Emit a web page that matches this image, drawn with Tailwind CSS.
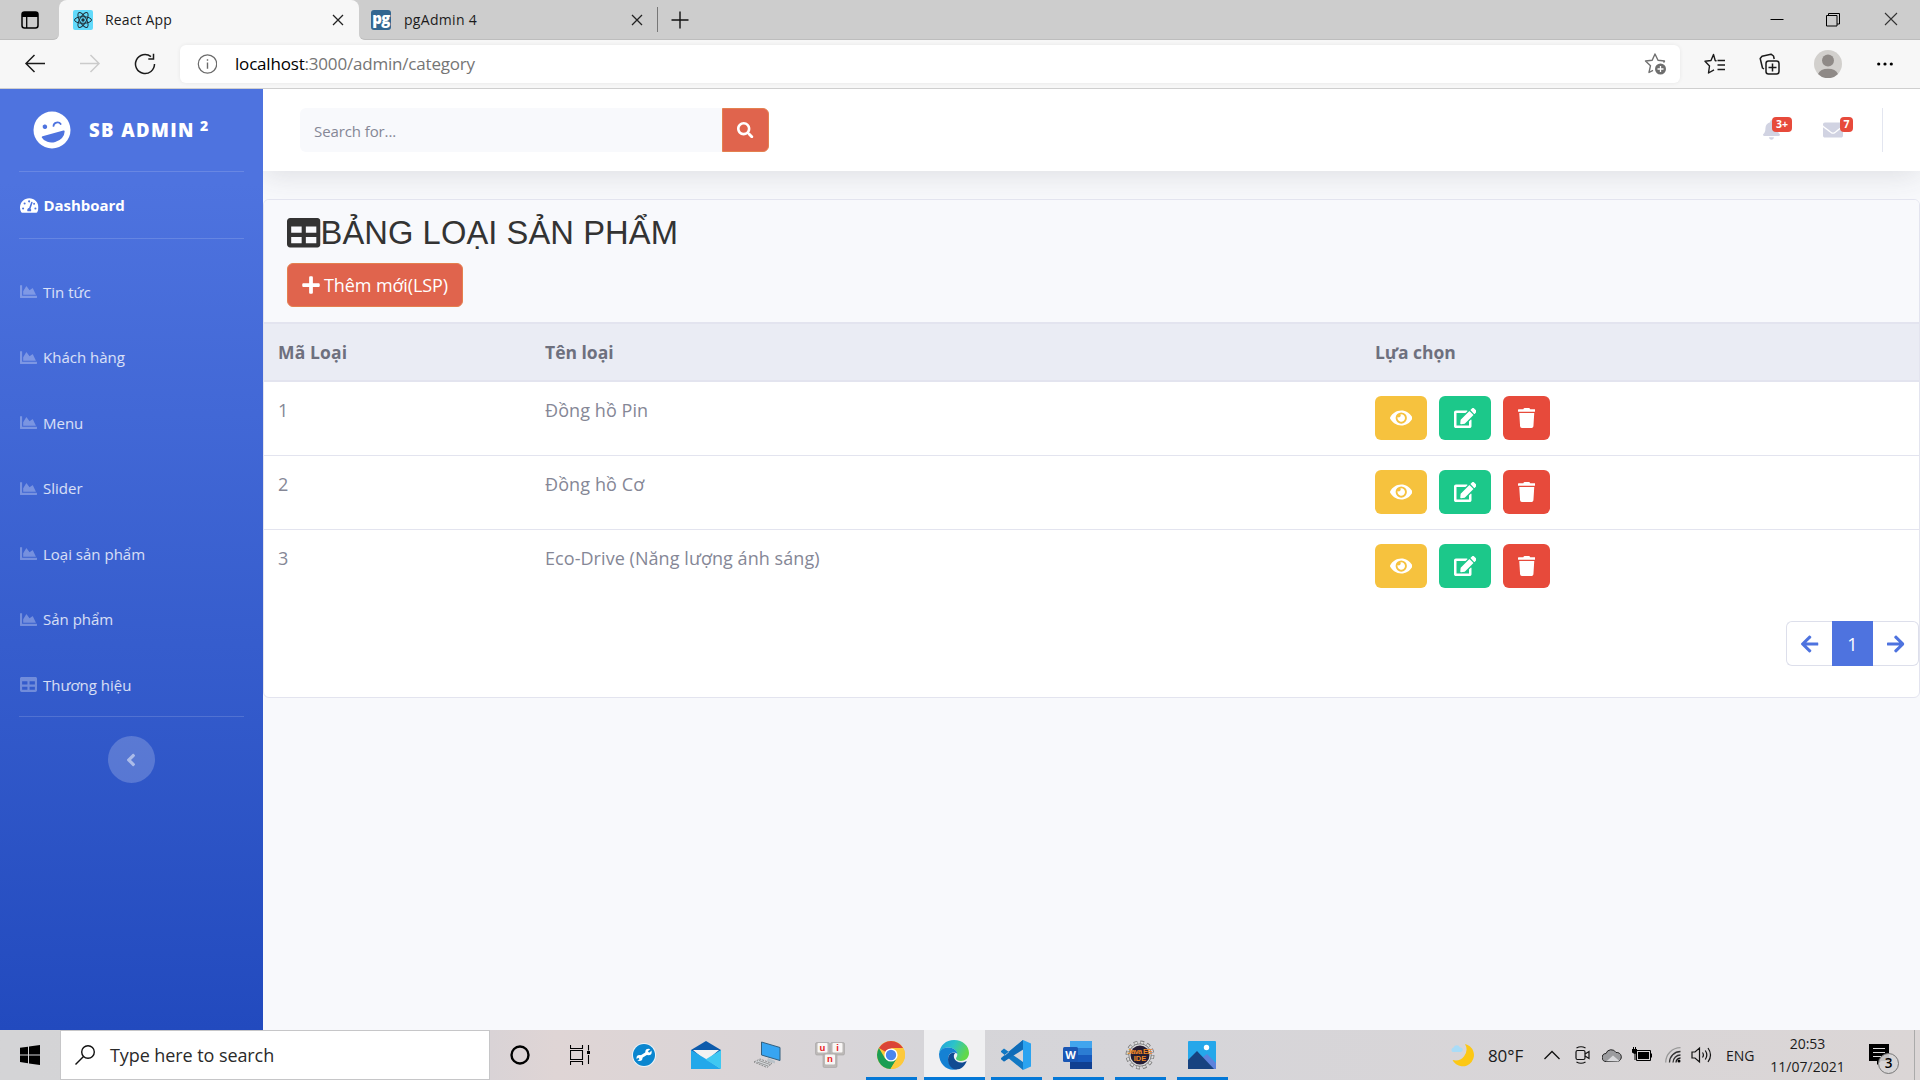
<!DOCTYPE html>
<html lang="vi">
<head>
<meta charset="utf-8">
<title>React App</title>
<script src="https://cdn.jsdelivr.net/npm/@tailwindcss/browser@4"></script>
</head>
<body class="w-[1920px] h-[1080px] overflow-hidden flex flex-col bg-white font-['Open_Sans','Noto_Sans',sans-serif] text-[#858796]">

<!-- Icon sprite -->
<svg class="hidden">
  <symbol id="chart" viewBox="0 0 512 512"><path d="M500 384c6.6 0 12 5.4 12 12v40c0 6.6-5.4 12-12 12H12c-6.600 0-12-5.400-12-12V76c0-6.600 5.400-12 12-12h40c6.600 0 12 5.400 12 12v308h436zM372.700 159.500L288 216l-85.300-113.700c-5.100-6.800-15.500-6.300-19.900 1L96 248v104h384l-89.900-187.800c-3.200-6.500-11.400-8.700-17.400-4.700z"/></symbol>
  <symbol id="table" viewBox="0 0 512 512"><path d="M464 32H48C21.490 32 0 53.490 0 80v352c0 26.510 21.490 48 48 48h416c26.510 0 48-21.490 48-48V80c0-26.510-21.490-48-48-48zM224 416H64v-96h160v96zm0-160H64v-96h160v96zm224 160H288v-96h160v96zm0-160H288v-96h160v96z"/></symbol>
  <symbol id="gauge" viewBox="0 0 576 512"><path fill-rule="evenodd" d="M288 32C129 32 0 161 0 320c0 53 14 102 39 145 6 9 16 15 27 15h444c11 0 21-6 27-15 25-43 39-92 39-145C576 161 447 32 288 32zM288 96a32 32 0 0 1 30 24l-8 24a32 32 0 1 1-22-48zM96 384a32 32 0 1 1 0-64 32 32 0 0 1 0 64zM144 224a32 32 0 1 1 0-64 32 32 0 0 1 0 64zM391 168L328 357a64 64 0 0 1 15 75H233a64 64 0 0 1 50-96l63-184a24 24 0 0 1 45 16zM407 212l12-36a32 32 0 1 1-12 36zM480 384a32 32 0 1 1 0-64 32 32 0 0 1 0 64z"/></symbol>
  <symbol id="search" viewBox="0 0 512 512"><path d="M505 442.700L405.300 343c-4.500-4.500-10.600-7-17-7H372c27.600-35.300 44-79.700 44-128C416 93.100 322.900 0 208 0S0 93.100 0 208s93.100 208 208 208c48.300 0 92.700-16.400 128-44v16.300c0 6.400 2.500 12.500 7 17l99.700 99.700c9.400 9.400 24.600 9.400 33.900 0l28.300-28.300c9.400-9.400 9.400-24.600.1-34zM208 336c-70.700 0-128-57.200-128-128 0-70.700 57.200-128 128-128 70.700 0 128 57.200 128 128 0 70.700-57.200 128-128 128z"/></symbol>
  <symbol id="plus" viewBox="0 0 448 512"><path d="M416 208H272V64c0-17.670-14.330-32-32-32h-32c-17.670 0-32 14.330-32 32v144H32c-17.670 0-32 14.330-32 32v32c0 17.670 14.330 32 32 32h144v144c0 17.670 14.330 32 32 32h32c17.670 0 32-14.330 32-32V304h144c17.670 0 32-14.330 32-32v-32c0-17.670-14.330-32-32-32z"/></symbol>
  <symbol id="eye" viewBox="0 0 576 512"><path d="M572.520 241.400C518.290 135.590 410.930 64 288 64S57.680 135.640 3.480 241.410a32.350 32.350 0 0 0 0 29.190C57.710 376.410 165.070 448 288 448s230.320-71.640 284.520-177.410a32.350 32.350 0 0 0 0-29.190zM288 400a144 144 0 1 1 144-144 143.930 143.930 0 0 1-144 144zm0-240a95.310 95.310 0 0 0-25.310 3.790 47.850 47.850 0 0 1-66.900 66.900A95.780 95.780 0 1 0 288 160z"/></symbol>
  <symbol id="edit" viewBox="0 0 576 512"><path d="M402.600 83.200l90.200 90.200c3.800 3.800 3.800 10 0 13.800L274.400 405.600l-92.800 10.300c-12.400 1.400-22.900-9.100-21.500-21.500l10.300-92.800L388.800 83.200c3.800-3.800 10-3.800 13.800 0zm162-22.900l-48.800-48.800c-15.200-15.200-39.900-15.200-55.200 0l-35.400 35.400c-3.800 3.800-3.800 10 0 13.800l90.200 90.200c3.800 3.800 10 3.800 13.800 0l35.400-35.400c15.200-15.300 15.200-40 0-55.200zM384 346.200V448H64V128h229.800c3.200 0 6.200-1.300 8.500-3.500l40-40c7.600-7.600 2.200-20.500-8.500-20.500H48C21.500 64 0 85.500 0 112v352c0 26.500 21.500 48 48 48h352c26.500 0 48-21.500 48-48V306.200c0-10.700-12.900-16-20.500-8.500l-40 40c-2.200 2.300-3.500 5.300-3.500 8.500z"/></symbol>
  <symbol id="trash" viewBox="0 0 448 512"><path d="M432 32H312l-9.400-18.700A24 24 0 0 0 281.100 0H166.800a23.720 23.720 0 0 0-21.400 13.300L136 32H16A16 16 0 0 0 0 48v32a16 16 0 0 0 16 16h416a16 16 0 0 0 16-16V48a16 16 0 0 0-16-16zM53.200 467a48 48 0 0 0 47.900 45h245.800a48 48 0 0 0 47.900-45L416 128H32z"/></symbol>
  <symbol id="mail" viewBox="0 0 512 512"><path d="M502.300 190.800c3.900-3.100 9.700-.2 9.700 4.700V400c0 26.500-21.500 48-48 48H48c-26.500 0-48-21.500-48-48V195.600c0-5 5.700-7.800 9.700-4.700 22.400 17.400 52.100 39.500 154.100 113.600 21.100 15.400 56.700 47.800 92.200 47.600 35.700.3 72-32.800 92.300-47.600 102-74.100 131.600-96.300 154-113.700zM256 320c23.200.4 56.600-29.200 73.400-41.400 132.700-96.300 142.800-104.700 173.400-128.700 5.800-4.500 9.200-11.500 9.200-18.900v-19c0-26.500-21.500-48-48-48H48c-26.500 0-48 21.500-48 48v19c0 7.400 3.400 14.300 9.200 18.900 30.600 23.900 40.700 32.400 173.400 128.700 16.800 12.200 50.200 41.800 73.400 41.400z"/></symbol>
  <symbol id="bell" viewBox="0 0 448 512"><path d="M224 512c35.320 0 63.970-28.650 63.970-64H160.030c0 35.350 28.650 64 63.970 64zm215.390-149.710c-19.320-20.760-55.470-51.990-55.470-154.290 0-77.700-54.480-139.900-127.940-155.160V32c0-17.670-14.320-32-31.980-32s-31.980 14.330-31.980 32v20.840C118.560 68.100 64.080 130.300 64.080 208c0 102.300-36.150 133.530-55.470 154.290-6 6.450-8.660 14.160-8.610 21.710.11 16.400 12.980 32 32.100 32h383.800c19.120 0 32-15.600 32.100-32 .05-7.550-2.610-15.270-8.610-21.710z"/></symbol>
  <symbol id="arrow" viewBox="0 0 448 512"><path d="M257.500 445.100l-22.200 22.200c-9.400 9.400-24.600 9.400-33.900 0L7 273c-9.400-9.400-9.400-24.600 0-33.900L201.400 44.700c9.400-9.400 24.600-9.400 33.900 0l22.200 22.200c9.500 9.500 9.300 25-.4 34.300L136.600 216H424c13.300 0 24 10.700 24 24v32c0 13.300-10.700 24-24 24H136.600l120.500 114.800c9.800 9.300 10 24.800.4 34.300z"/></symbol>
  <symbol id="angle" viewBox="0 0 256 512"><path d="M31.700 239l136-136c9.400-9.400 24.600-9.400 33.900 0l22.600 22.600c9.400 9.400 9.400 24.600 0 33.900L127.900 256l96.400 96.400c9.400 9.400 9.400 24.600 0 33.900L201.700 409c-9.400 9.400-24.600 9.400-33.900 0l-136-136c-9.500-9.400-9.500-24.600-.1-34z"/></symbol>
  <symbol id="close" viewBox="0 0 12 12"><path d="M1 1l10 10M11 1L1 11" fill="none" stroke="#222" stroke-width="1.300"/></symbol>
</svg>

<!-- Browser tab strip -->
<header class="shrink-0 h-[40px] flex bg-[#f7f7f7] text-[14px] text-[#1b1b1b]">
  <div class="w-[59px] bg-[#cdcdcd] border-b border-[#bdbdbd] rounded-br-md flex items-center pl-[21px]">
    <svg class="w-[18px] h-[18px]" viewBox="0 0 18 18"><rect x="1" y="1" width="16" height="16" rx="2.500" fill="none" stroke="#000" stroke-width="1.500"/><path d="M1 3.500a2.500 2.500 0 0 1 2.500-2.500h11a2.500 2.500 0 0 1 2.500 2.500V6H1z"/><path d="M5.700 6v11" stroke="#000" stroke-width="1.300"/></svg>
  </div>
  <div class="w-[300px] bg-[#cdcdcd]">
    <div class="h-full bg-[#f7f7f7] rounded-t-lg flex items-center pl-[14px] pr-[15px]">
      <svg class="w-5 h-5 mr-3" viewBox="0 0 20 20"><rect width="20" height="20" rx="2" fill="#61dafb"/><g fill="none" stroke="#20303a" stroke-width="1"><ellipse cx="10" cy="10" rx="8.500" ry="3.300"/><ellipse cx="10" cy="10" rx="8.500" ry="3.300" transform="rotate(60 10 10)"/><ellipse cx="10" cy="10" rx="8.500" ry="3.300" transform="rotate(120 10 10)"/></g><circle cx="10" cy="10" r="1.700" fill="#20303a"/></svg>
      <span class="flex-1 pb-px tracking-[0.15px]">React App</span>
      <svg class="w-3 h-3"><use href="#close"/></svg>
    </div>
  </div>
  <div class="flex-1 bg-[#cdcdcd] border-b border-[#bdbdbd] rounded-bl-md flex items-center pl-3">
    <div class="w-5 h-5 rounded-[3px] bg-[#326690] text-white font-extrabold text-[15px] leading-[16px] text-center tracking-[-0.5px]">pg</div>
    <span class="ml-[13px] w-[227px] tracking-[0.3px]">pgAdmin 4</span>
    <svg class="w-3 h-3"><use href="#close"/></svg>
    <div class="ml-[14px] w-px h-[25px] bg-[#777]"></div>
    <svg class="ml-[13px] w-[18px] h-[18px]" viewBox="0 0 18 18"><path d="M9 0.500v17M0.500 9h17" stroke="#111" stroke-width="1.400"/></svg>
    <div class="flex-1"></div>
    <svg class="w-[14px] h-[14px] mr-[42px]" viewBox="0 0 14 14"><path d="M0.500 6.500h13" stroke="#000"/></svg>
    <svg class="w-[14px] h-[14px] mr-[44px]" viewBox="0 0 14 14" fill="none" stroke="#000"><path d="M0.500 2.500h10.500v10.500h-10.500zM2.500 2.500v-2h11v10.500h-2.500"/></svg>
    <svg class="w-[14px] h-[14px] mr-[22px] -mt-0.5" viewBox="0 0 14 14"><path d="M1 1l12 12M13 1L1 13" stroke="#333" stroke-width="1.100"/></svg>
  </div>
</header>

<!-- Address toolbar -->
<div class="shrink-0 h-[49px] flex items-center bg-[#f7f7f7] border-b border-[#cfcfcf] pl-6 pb-px">
  <svg class="w-[22px] h-[22px]" viewBox="0 0 22 22" fill="none" stroke="#1b1b1b" stroke-width="1.500"><path d="M21 10.500H2M10.500 2L2 10.500l8.500 8.500"/></svg>
  <svg class="w-[22px] h-[22px] ml-[33px]" viewBox="0 0 22 22" fill="none" stroke="#cbcbcb" stroke-width="1.500"><path d="M1 10.500h19M11.500 2L20 10.500l-8.500 8.500"/></svg>
  <svg class="w-[22px] h-[22px] ml-[33px]" viewBox="0 0 22 22" fill="none" stroke="#1b1b1b" stroke-width="1.500"><path d="M20.500 11a9.500 9.500 0 1 1-3.500-7.300M19.500 0.800V6h-5.200"/></svg>
  <div class="ml-[24px] w-[1500px] h-[38px] bg-white rounded-md shadow-[0_0_4px_rgba(0,0,0,0.07)] flex items-center pl-[17px] pr-[14px]">
    <svg class="w-5 h-5" viewBox="0 0 20 20" fill="none" stroke="#6a6a6a" stroke-width="1.200"><circle cx="10.500" cy="10" r="9.200"/><path d="M10.500 8.500v6.200M10.500 5.200v1.600" stroke-width="1.400"/></svg>
    <span class="ml-[18px] flex-1 text-[17px] tracking-[-0.19px] text-[#757575]"><span class="text-black">localhost</span>:3000/admin/category</span>
    <svg class="w-[22px] h-[22px]" viewBox="0 0 22 22"><path d="M19.500 9.500l1-1.500-6.500-.8L11 1 8.200 7.200 1.500 8l5 4.700L5 19.500l4-2.200" fill="none" stroke="#707070" stroke-width="1.400" stroke-linejoin="round"/><circle cx="16.500" cy="16" r="5.500" fill="#6e6e6e"/><path d="M16.500 13v6M13.500 16h6" stroke="#fff" stroke-width="1.300"/></svg>
  </div>
  <svg class="ml-[24px] w-[21px] h-[22px]" viewBox="0 0 21 22" fill="none" stroke="#1b1b1b" stroke-width="1.400" stroke-linejoin="round"><path d="M12.500 8l-1.300-.5L9.500 1.500 7 7.500l-6 .8 4.500 4.700L4.500 20l5.500-3.200M13.500 7.500H21M13.500 12H21M13.500 16.500H21"/></svg>
  <svg class="ml-[34px] w-[21px] h-[22px]" viewBox="0 0 21 22" fill="none" stroke="#1b1b1b" stroke-width="1.500" stroke-linejoin="round"><rect x="7" y="8" width="13" height="13" rx="2.500"/><path d="M13.500 10.500v8M9.500 14.500h8M5 16L3.500 15 1.200 5.500 3 3.300 12 1.200 14.500 3l.7 3"/></svg>
  <svg class="ml-[34px] w-7 h-7" viewBox="0 0 28 28"><circle cx="14" cy="14" r="14" fill="#d2d0cd"/><circle cx="14" cy="10.500" r="6" fill="#8f8a87"/><path d="M4 24a10.500 7.500 0 0 1 20 0 14 14 0 0 1-20 0z" fill="#8f8a87"/></svg>
  <svg class="ml-[35px] w-4 h-4" viewBox="0 0 16 16"><circle cx="1.700" cy="8" r="1.600"/><circle cx="8" cy="8" r="1.600"/><circle cx="14.300" cy="8" r="1.600"/></svg>
</div>

<div class="shrink-0 h-[941px] flex">
  <!-- Sidebar -->
  <nav class="w-[263px] shrink-0 bg-linear-to-b from-[#4e73df] from-10% to-[#224abe] px-[19px] text-[15px] text-white/80 fill-white/30">
    <div class="h-[83px] border-b border-white/15 flex items-center pl-[14px] text-white">
      <svg class="w-[38px] h-[38px] -mt-px" viewBox="0 0 38 38"><circle cx="19" cy="19" r="18.500" fill="#fff"/><g transform="rotate(-15 19 19)"><path d="M8.300 22.500h21.500c.8 0 1.200.6 1 1.300a12 9.500 0 0 1-23.500 0c-.2-.7.300-1.300 1-1.300z" fill="#4e73df"/><circle cx="13" cy="14" r="2.300" fill="#4e73df"/><path d="M21.500 15.500c1-3.300 6.300-3.300 7.400 0" fill="none" stroke="#4e73df" stroke-width="1.800" stroke-linecap="round"/></g></svg>
      <span class="ml-[18px] text-[18.500px] font-extrabold tracking-[1.400px]">SB ADMIN</span>
      <span class="ml-[5px] text-[14px] font-extrabold pb-[10px]">2</span>
    </div>
    <div class="h-[67px] border-b border-white/15 flex items-center gap-[5px] pl-px text-white font-bold tracking-[-0.05px]">
      <svg class="w-[18.500px] h-[17px] fill-white"><use href="#gauge"/></svg><span>Dashboard</span>
    </div>
    <ul class="pt-[21px] border-b border-white/15 h-[478px] leading-[22px]">
      <li class="h-[65.500px] pt-[20.500px]"><a class="flex items-center gap-[6px] pl-px"><svg class="w-[17px] h-[17px]"><use href="#chart"/></svg>Tin tức</a></li>
      <li class="h-[65.500px] pt-[20.500px]"><a class="flex items-center gap-[6px] pl-px"><svg class="w-[17px] h-[17px]"><use href="#chart"/></svg>Khách hàng</a></li>
      <li class="h-[65.500px] pt-[20.500px]"><a class="flex items-center gap-[6px] pl-px"><svg class="w-[17px] h-[17px]"><use href="#chart"/></svg>Menu</a></li>
      <li class="h-[65.500px] pt-[20.500px]"><a class="flex items-center gap-[6px] pl-px"><svg class="w-[17px] h-[17px]"><use href="#chart"/></svg>Slider</a></li>
      <li class="h-[65.500px] pt-[20.500px]"><a class="flex items-center gap-[6px] pl-px"><svg class="w-[17px] h-[17px]"><use href="#chart"/></svg>Loại sản phẩm</a></li>
      <li class="h-[65.500px] pt-[20.500px]"><a class="flex items-center gap-[6px] pl-px"><svg class="w-[17px] h-[17px]"><use href="#chart"/></svg>Sản phẩm</a></li>
      <li class="pt-[20.500px]"><a class="flex items-center gap-[6px] pl-px"><svg class="w-[17px] h-[17px]"><use href="#table"/></svg>Thương hiệu</a></li>
    </ul>
    <button class="mx-auto mt-[19px] w-[47px] h-[47px] rounded-full bg-white/20 flex items-center justify-center pr-px"><svg class="w-[10px] h-[20px] fill-white/50"><use href="#angle"/></svg></button>
  </nav>

  <!-- Page content -->
  <main class="flex-1 bg-[#f8f9fc]">
    <div class="h-[82px] bg-white shadow-[0_3px_31px_rgba(58,59,69,0.15)] [clip-path:inset(0_0_-50px_0)] flex items-center pl-[37px] pr-[37px]">
      <div class="w-[422px] h-[44px] rounded-l-md bg-[#f8f9fc] flex items-center pl-[14px] pt-0.5 text-[15px] tracking-[-0.1px]">Search for...</div>
      <button class="w-[47px] h-[44px] rounded-r-md bg-[#e0644d] border border-[#e4804f] flex items-center justify-center"><svg class="w-[16.500px] h-[16.500px] fill-white"><use href="#search"/></svg></button>
      <div class="ml-auto relative mr-[43px]">
        <svg class="w-[17px] h-[20px] fill-[#d1d3e2]"><use href="#bell"/></svg>
        <span class="absolute -top-[3px] left-[9px] w-5 h-[15px] rounded bg-[#e74a3b] text-white text-[10.500px] leading-[15px] font-bold text-center">3+</span>
      </div>
      <div class="relative mr-[39px]">
        <svg class="w-5 h-5 fill-[#d1d3e2]"><use href="#mail"/></svg>
        <span class="absolute -top-[3px] left-[17px] w-[13px] h-[15px] rounded bg-[#e74a3b] text-white text-[10.500px] leading-[15px] font-bold text-center">7</span>
      </div>
      <div class="w-px h-[44px] bg-[#e3e6f0]"></div>
    </div>

    <section class="relative mt-7 h-[499px] rounded-md border border-[#e3e4ef] bg-white overflow-hidden">
      <div class="h-[122px] bg-[#f8f9fc] pl-[23px] pt-[14px]">
        <h1 class="h-[38px] flex items-center font-['Liberation_Sans',sans-serif] text-[32.700px] leading-[38px] tracking-[0.08px] text-[#333]"><svg class="w-[33.500px] h-[33.500px] fill-[#333]"><use href="#table"/></svg>BẢNG LOẠI SẢN PHẨM</h1>
        <button class="mt-[11px] w-[176px] h-[44px] rounded-md bg-[#e0644d] border border-[#e4804f] text-white text-[18px] tracking-[-0.1px] flex items-center pl-[14px]"><svg class="w-[18px] h-5 mr-1 fill-white"><use href="#plus"/></svg>Thêm mới(LSP)</button>
      </div>
      <div class="h-[60px] bg-[#eaecf4] border-y-2 border-[#e3e4ef] grid grid-cols-[267px_830px_1fr] items-center pl-[14px] pt-px text-[17.500px] font-bold text-[#6e707e]">
        <div class="tracking-[0.15px]">Mã Loại</div><div>Tên loại</div><div class="tracking-[-0.05px]">Lựa chọn</div>
      </div>
      <div class="text-[18px] leading-[27px]">
        <div class="h-[74px] border-b border-[#e3e4ef] grid grid-cols-[267px_830px_1fr] pl-[14px] pt-[14px]">
          <div class="pt-px">1</div><div class="pt-px tracking-[0.08px]">Đồng hồ Pin</div>
          <div class="flex gap-3 fill-white">
            <button class="w-[52px] h-[44px] rounded-md bg-[#f6c23e] flex items-center justify-center"><svg class="w-[22.500px] h-5"><use href="#eye"/></svg></button>
            <button class="w-[52px] h-[44px] rounded-md bg-[#1cc88a] flex items-center justify-center"><svg class="w-[22.500px] h-5"><use href="#edit"/></svg></button>
            <button class="w-[47px] h-[44px] rounded-md bg-[#e74a3b] flex items-center justify-center"><svg class="w-[17.500px] h-5"><use href="#trash"/></svg></button>
          </div>
        </div>
        <div class="h-[74px] border-b border-[#e3e4ef] grid grid-cols-[267px_830px_1fr] pl-[14px] pt-[14px]">
          <div class="pt-px">2</div><div class="pt-px tracking-[0.1px]">Đồng hồ Cơ</div>
          <div class="flex gap-3 fill-white">
            <button class="w-[52px] h-[44px] rounded-md bg-[#f6c23e] flex items-center justify-center"><svg class="w-[22.500px] h-5"><use href="#eye"/></svg></button>
            <button class="w-[52px] h-[44px] rounded-md bg-[#1cc88a] flex items-center justify-center"><svg class="w-[22.500px] h-5"><use href="#edit"/></svg></button>
            <button class="w-[47px] h-[44px] rounded-md bg-[#e74a3b] flex items-center justify-center"><svg class="w-[17.500px] h-5"><use href="#trash"/></svg></button>
          </div>
        </div>
        <div class="h-[91px] grid grid-cols-[267px_830px_1fr] pl-[14px] pt-[14px]">
          <div class="pt-px">3</div><div class="pt-px tracking-[0.06px]">Eco-Drive (Năng lượng ánh sáng)</div>
          <div class="flex gap-3 fill-white">
            <button class="w-[52px] h-[44px] rounded-md bg-[#f6c23e] flex items-center justify-center"><svg class="w-[22.500px] h-5"><use href="#eye"/></svg></button>
            <button class="w-[52px] h-[44px] rounded-md bg-[#1cc88a] flex items-center justify-center"><svg class="w-[22.500px] h-5"><use href="#edit"/></svg></button>
            <button class="w-[47px] h-[44px] rounded-md bg-[#e74a3b] flex items-center justify-center"><svg class="w-[17.500px] h-5"><use href="#trash"/></svg></button>
          </div>
        </div>
      </div>
      <div class="flex justify-end fill-[#4e73df] text-[18px]">
        <a class="w-[46px] h-[45px] border border-r-0 border-[#dddfeb] rounded-l-md flex items-center justify-center pl-px"><svg class="w-[17.500px] h-5"><use href="#arrow"/></svg></a>
        <a class="w-[41px] h-[45px] bg-[#4e73df] text-white flex items-center justify-center pt-0.5">1</a>
        <a class="w-[46px] h-[45px] border border-l-0 border-[#dddfeb] rounded-r-md flex items-center justify-center"><svg class="w-[17.500px] h-5 -scale-x-100"><use href="#arrow"/></svg></a>
      </div>
    </section>
  </main>
</div>

<!-- Taskbar -->
<footer class="h-[50px] shrink-0 flex bg-linear-to-r from-[#d4d4d6] via-[#d6d5d9] via-60% to-[#dbd6d6] text-[#1b1b1b]">
  <div class="w-[60px] flex items-center pl-5"><svg class="w-5 h-5" viewBox="0 0 20 20"><path d="M0 2.800L8 1.700v7.700H0zM9 1.500L20 0v9.400H9zM0 10.400h8V18.200L0 17.100zM9 10.400h11V20L9 18.400z"/></svg></div>
  <div class="w-[430px] bg-white border border-[#c6c6c8] flex items-center pl-[14px]">
    <svg class="w-5 h-5" viewBox="0 0 20 20" fill="none" stroke="#111" stroke-width="1.400"><circle cx="13" cy="7" r="6.300"/><path d="M8.500 11.500L0.500 19.500"/></svg>
    <span class="ml-[15px] text-[18px] tracking-[-0.08px] text-[#2a2a2a]">Type here to search</span>
  </div>
  <div class="flex bg-linear-to-r from-[#d9d3d6] via-[#dfd5d5] via-15% to-[#d6d5d9]">
    <div class="w-[61px] flex items-center justify-center pr-px"><svg class="w-5 h-5" viewBox="0 0 20 20"><circle cx="10" cy="10" r="8.500" fill="none" stroke="#000" stroke-width="2.400"/></svg></div>
    <div class="w-[58px] flex items-center justify-center"><svg class="w-5 h-5" viewBox="0 0 20 20" fill="none" stroke="#000" stroke-width="1.100"><path d="M0.500 5.500h12v9h-12zM0.500 0v3.500h12V0M0.500 20v-3.500h12V20M18.500 0v5.500M18.500 10v9"/><path d="M17 6h3v3h-3z" fill="#000" stroke="none"/></svg></div>
    <div class="w-[70px] flex items-center justify-center"><svg class="w-6 h-6" viewBox="0 0 24 24"><circle cx="12" cy="12" r="12" fill="#eef4f8"/><circle cx="12" cy="12" r="11" fill="#0b86cf"/><path d="M8 14.500L16 9.500" stroke="#fff" stroke-width="3"/><circle cx="7.500" cy="15" r="3" fill="#fff"/><circle cx="16.500" cy="9" r="3.200" fill="#fff"/><path d="M16.500 9l4-3.500M7 15.500l-4 2.500" stroke="#0b86cf" stroke-width="2"/></svg></div>
    <div class="w-[54px] flex items-center justify-center"><svg class="w-[30px] h-7" viewBox="0 0 30 28"><path d="M0 9L15 0l15 9v6H0z" fill="#0d5bab"/><path d="M2 9h26L15 20z" fill="#f2f2f2"/><path d="M0 9v19h30L15 18z" fill="#22a8ea"/><path d="M30 9L14.500 18.500 30 28z" fill="#3fc8f2"/></svg></div>
    <div class="w-[68px] flex items-center justify-center"><svg class="w-7 h-7" viewBox="0 0 28 28"><path d="M8.500 1l18.500 5.500v13L8.500 14z" fill="#37a5f2" stroke="#34607f" stroke-width="1"/><path d="M15 17l-1 3 8 2.500V20" fill="#b9c2c8"/><path d="M1 21l6-3 12 4.500-5 4z" fill="#d5d8db" stroke="#777" stroke-width=".8" stroke-dasharray="2 1"/><path d="M4 21l11 4M6 19.500l11 4" stroke="#888" stroke-width=".8"/></svg></div>
    <div class="w-[57px] flex items-center justify-center"><svg class="w-[30px] h-[26px]" viewBox="0 0 30 26" font-family="Liberation Sans" font-weight="bold" font-size="9.500" fill="#e81c24" text-anchor="middle"><g fill="#bcb9b7" stroke="#a5a3a2" stroke-width=".6"><rect x=".5" y=".5" width="14" height="12.500" rx="1.500"/><rect x="15.500" y=".5" width="14" height="12.500" rx="1.500"/><rect x="8" y="12" width="14" height="13.500" rx="1.500"/></g><g fill="#f8f6f5"><rect x="2.500" y="1" width="10" height="9.500" rx="1"/><rect x="17.500" y="1" width="10" height="9.500" rx="1"/><rect x="10" y="12.500" width="10" height="10" rx="1"/></g><text x="7.500" y="8.500">u</text><text x="22.500" y="8.700">i</text><text x="15" y="20">n</text></svg></div>
    <div class="w-[66px] flex items-center justify-center relative"><svg class="w-7 h-7" viewBox="0 0 28 28"><circle cx="14" cy="14" r="14" fill="#fdc93b"/><path d="M14 14L1.900 7A14 14 0 0 1 26.100 7z" fill="#db4437"/><path d="M1.900 7A14 14 0 0 0 13.500 28L20 17.300 8 17.300z" fill="#1b9e54"/><path d="M14 7h12.100A14 14 0 0 1 13.500 28L20 17.500z" fill="#fdc93b"/><circle cx="14" cy="14" r="6.600" fill="#fff"/><circle cx="14" cy="14" r="5.200" fill="#4a86ee"/></svg><div class="absolute bottom-0 w-[51px] h-[3px] bg-[#0478d7]"></div></div>
  </div>
  <div class="w-[61px] flex items-center justify-center bg-[#f0f0f2] border-b-[3px] border-[#0478d7] pt-[3px] pr-px">
    <svg class="w-[30px] h-[30px]" viewBox="0 0 30 30"><defs><linearGradient id="eg" x1="0" x2="1" y1="0" y2=".4"><stop offset="0" stop-color="#1f9de0"/><stop offset=".5" stop-color="#2cc3c9"/><stop offset="1" stop-color="#62d84a"/></linearGradient></defs><path d="M0 14C1 5 7 0 15 0c9 0 15 6 15 13 0 5-4 8-8 8-3 0-5-1-5-2.500 0-1 1.300-1.500 1.300-4 0-4-4-7-9-7C5 7.500 1 10 0 14z" fill="url(#eg)"/><path d="M0 14c1-4.500 5-6.500 9.300-6.500 5 0 9 3 9 6.500-2-2.500-8-2-9 3-1 6 3 11 9 12-9 3-18.300-4-18.300-15z" fill="#1581d3"/><path d="M9.300 17c1-3.500 4-5 7-4-3 2-1.500 9.500 6 9.500 2 0 4-.7 5.500-1.500-2 5-6 8.500-10.500 8.500-5 0-9.500-6-8-12.500z" fill="#114b92"/></svg>
  </div>
  <div class="w-[62px] relative flex items-center justify-center"><svg class="w-[30px] h-[30px]" viewBox="0 0 30 30"><path d="M0 11l3-2.500L22 22v8L0 12zM0 19l3 2.500L22 8V0L0 18z" fill="#1279c4"/><path d="M0 19L22 0l1 9L3 21.500z" fill="#0f6cb8"/><path d="M22 0l8 3.500v23L22 30z" fill="#2ba3f0"/></svg><div class="absolute bottom-0 w-[51px] h-[3px] bg-[#0478d7]"></div></div>
  <div class="w-[62px] relative flex items-center justify-center"><svg class="w-[30px] h-7" viewBox="0 0 30 28"><path d="M7 0h22v7H7z" fill="#41a5ee"/><path d="M7 7h22v7H7z" fill="#2b7cd3"/><path d="M7 14h22v7H7z" fill="#185abd"/><path d="M7 21h22v7H7z" fill="#103f91"/><rect y="6" width="15" height="15" rx="1.500" fill="#1a56b4"/><text x="7.500" y="17.700" font-family="Open Sans" font-size="11" font-weight="bold" fill="#fff" text-anchor="middle">W</text></svg><div class="absolute bottom-0 w-[51px] h-[3px] bg-[#0478d7]"></div></div>
  <div class="w-[62px] relative flex items-center justify-center"><svg class="w-[30px] h-[30px]" viewBox="0 0 30 30"><circle cx="15" cy="15" r="12.700" fill="none" stroke="#777" stroke-width="3.400" stroke-dasharray="3.700 2.950"/><circle cx="15" cy="15" r="12.500" fill="none" stroke="#ddd" stroke-width="2.200" stroke-dasharray="2.700 3.845" stroke-dashoffset="-.5"/><circle cx="15" cy="15" r="11.200" fill="#dcdcdc" stroke="#666" stroke-width=".7"/><circle cx="15" cy="15" r="9.500" fill="#241c33"/><g font-family="Liberation Sans" font-weight="bold" font-size="7.500" fill="#f08a24" text-anchor="middle"><text x="15" y="14" textLength="25">Java EE</text><text x="15" y="20.500">IDE</text></g></svg><div class="absolute bottom-0 w-[51px] h-[3px] bg-[#0478d7]"></div></div>
  <div class="w-[62px] relative flex items-center justify-center"><svg class="w-7 h-7" viewBox="0 0 28 28"><rect width="28" height="28" rx="1" fill="#25a7ea"/><path d="M10 20l9-7 9 9v6H14z" fill="#5d82dc"/><path d="M0 19L9 10l17 18H0z" fill="#174380"/><circle cx="18.500" cy="6.500" r="2.700" fill="#fff"/></svg><div class="absolute bottom-0 w-[51px] h-[3px] bg-[#0478d7]"></div></div>

  <!-- System tray -->
  <div class="ml-auto flex items-center">
    <div class="w-[37px]"><svg class="w-6 h-6" viewBox="0 0 24 24"><path d="M14 1A11.300 11.300 0 1 1 1.500 17 11 11 0 0 0 14 1z" fill="#fcc815"/><path d="M1.500 9a2.500 2.500 0 0 1 1-4.500 3.500 3.500 0 0 1 6.500 0A2.300 2.300 0 0 1 10 9z" fill="#a9dcf7"/></svg></div>
    <div class="w-[56px] text-[17px] pt-0.5 tracking-[-0.1px]">80°F</div>
    <div class="w-[31px]"><svg class="w-4 h-4" viewBox="0 0 16 16"><path d="M0.500 12L8 4.500 15.500 12" fill="none" stroke="#111" stroke-width="1.300"/></svg></div>
    <div class="w-[27px]"><svg class="w-4 h-[18px]" viewBox="0 0 16 18" fill="none" stroke="#111" stroke-width="1.200"><rect x="1" y="4.500" width="9" height="9" rx="1.500"/><path d="M10 8l4-2.500v7L10 10M1.500 2Q6 -.5 10.500 2M1.500 16q4.500 2.500 9 0"/></svg></div>
    <div class="w-[30px]"><svg class="w-5 h-4" viewBox="0 0 20 16"><path d="M4.500 14.500a4 4 0 0 1-.5-8A5.500 5.500 0 0 1 14 5.500a4.500 4.500 0 0 1 1.500 9z" fill="#9c9c9f" stroke="#222"/><path d="M4.500 14.200L11 8.500l6.500 5.500-2 .5z" fill="#d9d9dc"/></svg></div>
    <div class="w-[33px]"><svg class="w-5 h-4" viewBox="0 0 20 16"><path d="M4.500 3.500h14v10h-14z" fill="none" stroke="#000"/><path d="M6 5h11v7H6z"/><path d="M19 6.500h1v4h-1zM0 2h5v3.500L3.500 7v6h-1V7L0 5.500zM1 0h1v2H1zM3 0h1v2H3z"/></svg></div>
    <div class="w-[26px]"><svg class="w-4 h-4" viewBox="0 0 16 16" fill="none" stroke-width="1.300"><path d="M0.700 15.500A14.800 14.800 0 0 1 15.500.7" stroke="#999"/><path d="M4.500 15.500a11 11 0 0 1 11-11M8 15.500A7.500 7.500 0 0 1 15.500 8" stroke="#333"/><path d="M11 15.500a4.500 4.500 0 0 1 4.500-4.500" stroke="#111"/><circle cx="14" cy="14" r="1.500" fill="#000"/></svg></div>
    <div class="w-[35px]"><svg class="w-[22px] h-[18px]" viewBox="0 0 22 18" fill="none" stroke="#111" stroke-width="1.200"><path d="M1 6h3l4.500-4v14L4 12H1zM11.500 6.500q1.800 2.500 0 5M14.300 4.500q3 4.500 0 9M17 2q5 7 0 14"/></svg></div>
    <div class="w-[44px] text-[14px]">ENG</div>
    <div class="w-[75px] text-center text-[14px] leading-[23px] whitespace-nowrap"><div>20:53</div><div>11/07/2021</div></div>
    <div class="w-[45px] ml-[24px]"><svg class="w-[32px] h-[32px] mt-[9px]" viewBox="0 0 32 32"><path d="M0 0h20v17h-8l-4 4v-4H0z"/><path d="M4 4.500h12M4 8.500h12M4 12.500h8" stroke="#ddd" stroke-width="1.200"/><circle cx="19.500" cy="19.500" r="10" fill="#d6d5d6" fill-opacity=".9" stroke="#777"/><text x="19.500" y="24.200" font-family="Open Sans" font-size="13.500" font-weight="600" text-anchor="middle">3</text></svg></div>
    <div class="w-[6px] h-[50px] border-l border-[#aaa]"></div>
  </div>
</footer>
</body>
</html>
